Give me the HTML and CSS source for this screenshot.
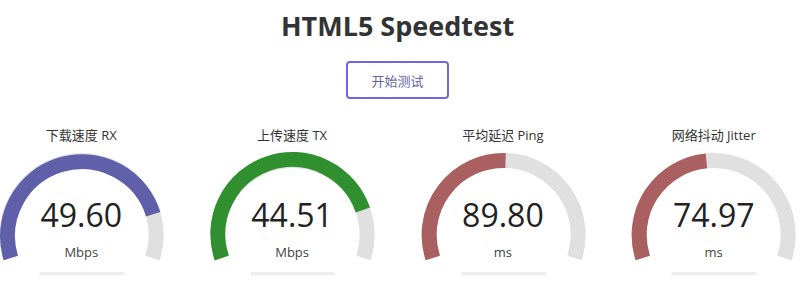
FILE: index.html
```html
<!DOCTYPE html>
<html lang="zh-CN">
<head>
  <meta charset="UTF-8">
  <title>HTML5 Speedtest</title>
  <link rel="stylesheet" href="styles.css">
</head>
<body>
<h1>HTML5 Speedtest</h1>
<div class="start">
  <a href="#" class="start-btn">开始测试</a>
</div>
<div class="test-wrapper">
  <div class="test-area">
    <svg class="meter" viewBox="0 0 211.3 165" width="211.3" height="165">
      <path class="meter-bg" d="M34.8 133.02 A74.5 74.5 0 1 1 176.5 133.02"/>
      <path class="meter-fg dl" d="M34.8 133.02 A74.5 74.5 0 1 1 177.25 89.3"/>
      <rect class="meter-prog" x="63.4" y="147" width="84.5" height="3.5"/>
    </svg>
    <div class="test-name">下载速度 RX</div>
    <div class="meter-text">49.60</div>
    <div class="unit">Mbps</div>
  </div>
  <div class="test-area">
    <svg class="meter" viewBox="0 0 211.3 165" width="211.3" height="165">
      <path class="meter-bg" d="M34.8 133.02 A74.5 74.5 0 1 1 176.5 133.02"/>
      <path class="meter-fg ul" d="M34.8 133.02 A74.5 74.5 0 0 1 175.85 85"/>
      <rect class="meter-prog" x="63.4" y="147" width="84.5" height="3.5"/>
    </svg>
    <div class="test-name">上传速度 TX</div>
    <div class="meter-text">44.51</div>
    <div class="unit">Mbps</div>
  </div>
  <div class="test-area">
    <svg class="meter" viewBox="0 0 211.3 165" width="211.3" height="165">
      <path class="meter-bg" d="M34.8 133.02 A74.5 74.5 0 1 1 176.5 133.02"/>
      <path class="meter-fg ping" d="M34.8 133.02 A74.5 74.5 0 0 1 107.6 35.5"/>
      <rect class="meter-prog" x="63.4" y="147" width="84.5" height="3.5"/>
    </svg>
    <div class="test-name">平均延迟 Ping</div>
    <div class="meter-text">89.80</div>
    <div class="unit">ms</div>
  </div>
  <div class="test-area">
    <svg class="meter" viewBox="0 0 211.3 165" width="211.3" height="165">
      <path class="meter-bg" d="M34.8 133.02 A74.5 74.5 0 1 1 176.5 133.02"/>
      <path class="meter-fg ping" d="M34.8 133.02 A74.5 74.5 0 0 1 98.4 35.86"/>
      <rect class="meter-prog" x="63.4" y="147" width="84.5" height="3.5"/>
    </svg>
    <div class="test-name">网络抖动 Jitter</div>
    <div class="meter-text">74.97</div>
    <div class="unit">ms</div>
  </div>
</div>
</body>
</html>
```

FILE: styles.css
```css
* {
  margin: 0;
  padding: 0;
}

body {
  padding-right: 5px;
  background-color: #fff;
  color: #333;
  font-family: "Open Sans", "Noto Sans CJK SC", sans-serif;
  overflow: hidden;
}

h1 {
  margin-top: 8px;
  font-size: 27px;
  line-height: 36px;
  font-weight: 700;
  color: #333;
  text-align: center;
}

.start {
  display: flex;
  justify-content: center;
  margin-top: 17px;
}

.start-btn {
  display: flex;
  align-items: center;
  justify-content: center;
  box-sizing: border-box;
  width: 103px;
  height: 38px;
  border: 2px solid #6f66e6;
  border-radius: 4px;
  background-color: #fff;
  color: #6464a4;
  font-size: 13px;
  text-decoration: none;
}

.test-wrapper {
  display: flex;
  justify-content: center;
  margin-top: 26px;
}

.test-area {
  flex-shrink: 0;
  position: relative;
  width: 210.8px;
  height: 165px;
  display: flex;
  flex-direction: column;
  align-items: center;
}

.meter {
  position: absolute;
  top: 0;
  left: 0;
  z-index: 0;
}

.meter-bg,
.meter-fg {
  fill: none;
  stroke-width: 15;
}

.meter-bg {
  stroke: #e0e0e0;
}

.meter-fg.dl {
  stroke: #6060aa;
}

.meter-fg.ul {
  stroke: #309030;
}

.meter-fg.ping {
  stroke: #aa6060;
}

.meter-prog {
  fill: #eee;
}

.test-name,
.meter-text,
.unit {
  position: relative;
  z-index: 1;
}

.test-name {
  font-size: 13px;
  line-height: 20px;
  color: #333;
}

.meter-text {
  margin-top: 50px;
  font-size: 32px;
  line-height: 40px;
  color: #222;
}

.unit {
  margin-top: 7px;
  font-size: 13px;
  line-height: 20px;
  color: #444;
}
```
